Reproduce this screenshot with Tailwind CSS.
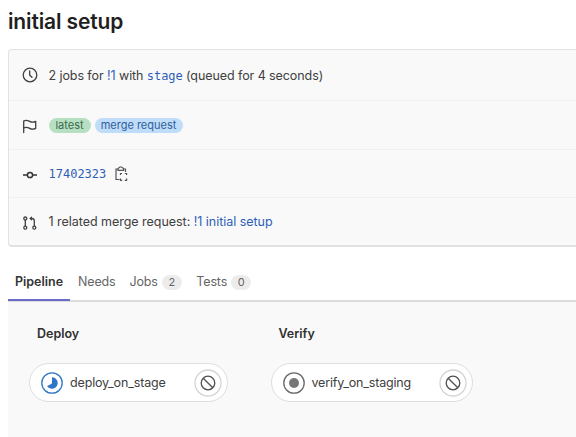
<!DOCTYPE html>
<html lang="en">
<head>
<meta charset="utf-8">
<title>initial setup</title>
<script src="https://cdn.jsdelivr.net/npm/@tailwindcss/browser@4"></script>
</head>
<body class="h-[437px] w-[576px] overflow-hidden bg-white pl-2 font-['Inter',sans-serif] text-[13px] text-[#404040] whitespace-nowrap">
<h1 class="flex h-[49px] items-start pt-[8px] text-[21px] leading-[28px] font-semibold tracking-[-0.13px] text-[#1f1f1f]">initial setup</h1>

<section class="h-[198px] w-[580px] rounded border border-b-2 border-[#e2e2e2] bg-[#f9f9f9] text-[12.5px]">
  <div class="flex h-[51px] items-center border-b border-[#efefef] pl-[13px]">
    <svg class="mr-[10.500px] size-4 shrink-0" viewBox="0 0 16 16" fill="none" stroke="#404040" stroke-width="1.3"><circle cx="8" cy="8" r="6.800"/><path d="M7.700 3.800v4.300l2.300 2.200" stroke-linecap="round"/></svg>
    <p class="pt-[3px] tracking-[-0.08px]">2 jobs for <a class="text-[#2f5fb8]">!1</a> with <a class="font-['DejaVu_Sans_Mono',monospace] text-[12px] text-[#2f5fb8]">stage</a> (queued for 4 seconds)</p>
  </div>
  <div class="flex h-[49px] items-center border-b border-[#efefef] pl-[13px]">
    <svg class="mt-px mr-[10.500px] size-4 shrink-0" viewBox="0 0 16 16" fill="none" stroke="#404040" stroke-width="1.3" stroke-linejoin="round" stroke-linecap="round"><path d="M1.700 14.500V3C4.200 1.500 5.700 2.300 7.700 3.400s3.500 1.200 6 0v7c-2.500 1.200-4 1.100-6 0s-3.500-1.700-6-.4"/></svg>
    <span class="mr-1 flex h-[15px] w-[42px] items-center justify-center rounded-full bg-[#b7e0c2] pt-px text-[11px] text-[#3a6b4b]">latest</span>
    <span class="flex h-[15px] w-[88px] items-center justify-center rounded-full bg-[#bfdcf8] pt-px text-[11px] text-[#315f9d]">merge request</span>
  </div>
  <div class="flex h-[48px] items-center border-b border-[#efefef] pl-[13px]">
    <svg class="mr-[10.500px] size-4 shrink-0" viewBox="0 0 16 16" fill="none" stroke="#333" stroke-width="1.5"><circle cx="8" cy="9" r="2.600"/><path d="M1 9h4.400M10.600 9H15"/></svg>
    <a class="font-['DejaVu_Sans_Mono',monospace] text-[12px] text-[#2f5fb8]">17402323</a>
    <svg class="mt-px ml-[6.500px] size-4" viewBox="0 0 16 16" fill="none" stroke="#555" stroke-width="1.200"><path d="M5 3H3v10.500h3.500M10.500 3H12.500v3M5 4.300V2.600L7 1h1.500l2 1.600v1.700z"/><path d="M7.500 9V7.500h1.500M11.800 7.500h1.800V9M13.600 12.500v1.900H11.800M9.200 14.400H7.500v-1.900"/></svg>
  </div>
  <div class="flex h-[47px] items-center pl-[13px]">
    <svg class="mt-[2px] mr-[10.500px] size-4 shrink-0" viewBox="0 0 16 16" fill="none" stroke="#404040" stroke-width="1.300"><circle cx="3.300" cy="3.500" r="1.500"/><circle cx="3.300" cy="12.700" r="1.500"/><circle cx="12.300" cy="12.700" r="1.500"/><path d="M3.300 5v6.200M12.300 11.200V6q0-2.500-2.300-2.500H8.500"/><path d="M10 1.300 7.200 3.500 10 5.700z" fill="#404040" stroke="none"/></svg>
    <p class="pt-[2px] tracking-[-0.03px]">1 related merge request: <a class="text-[#2f5fb8]">!1 initial setup</a></p>
  </div>
</section>

<nav class="mt-[15px] flex h-[40px] border-b-2 border-[#dcdcdc] text-[12.5px] text-[#666]">
  <a class="mb-[-2px] flex h-[39px] w-[62px] items-center justify-center border-b-2 border-[#6b6bc7] pt-[3px] font-semibold text-[#333]">Pipeline</a>
  <a class="ml-2 flex h-[39px] items-center pt-px tracking-[-0.15px]">Needs</a>
  <a class="ml-[14px] flex h-[39px] items-center pt-px tracking-[-0.15px]">Jobs<span class="ml-[4px] flex h-[15px] w-5 items-center justify-center rounded-full bg-[#ececec] text-[11px]">2</span></a>
  <a class="ml-[14.500px] flex h-[39px] items-center pt-px tracking-[-0.15px]">Tests<span class="ml-[4px] flex h-[15px] w-5 items-center justify-center rounded-full bg-[#ececec] text-[11px]">0</span></a>
</nav>

<main class="flex h-[135px] bg-[#f9f9f9] pt-[22px] pl-[21px]">
  <section class="w-[241.500px]">
    <h2 class="pl-2 text-[12.5px] leading-5 font-semibold text-[#303030]">Deploy</h2>
    <div class="mt-[19px] flex h-[39px] w-[199px] items-center rounded-full border-[1.500px] border-[#dedede] bg-white pr-[5px] pl-[11px] text-[12.5px]">
      <svg class="mr-[7px] size-[22px]" viewBox="0 0 22 22"><circle cx="11" cy="11" r="10.200" fill="none" stroke="#2f76c8" stroke-width="1.300"/><path d="M11 5.300a5.700 5.700 0 1 1-4.900 8.600L10.200 12Q11 11.500 11 10.500z" fill="#2f76c8"/></svg>
      <span class="pt-px tracking-[-0.15px]">deploy_on_stage</span>
      <svg class="ml-auto size-[28px]" viewBox="0 0 28 28" fill="none"><circle cx="14" cy="14" r="13" fill="#fff" stroke="#d4d4d4" stroke-width="1.300"/><g stroke="#505050" stroke-width="1.300"><circle cx="14" cy="14" r="6.800"/><path d="m9.200 9.200 9.600 9.600"/></g></svg>
    </div>
  </section>
  <section>
    <h2 class="pl-2 text-[12.5px] leading-5 font-semibold text-[#303030]">Verify</h2>
    <div class="mt-[19px] flex h-[39px] w-[202px] items-center rounded-full border-[1.500px] border-[#dedede] bg-white pr-[5px] pl-[11px] text-[12.5px]">
      <svg class="mr-[7px] size-[22px]" viewBox="0 0 22 22"><circle cx="11" cy="11" r="10.200" fill="none" stroke="#686868" stroke-width="1.300"/><circle cx="11" cy="11" r="5" fill="#777"/></svg>
      <span class="pt-px tracking-[-0.17px]">verify_on_staging</span>
      <svg class="ml-auto size-[28px]" viewBox="0 0 28 28" fill="none"><circle cx="14" cy="14" r="13" fill="#fff" stroke="#d4d4d4" stroke-width="1.300"/><g stroke="#505050" stroke-width="1.300"><circle cx="14" cy="14" r="6.800"/><path d="m9.200 9.200 9.600 9.600"/></g></svg>
    </div>
  </section>
</main>
</body>
</html>
